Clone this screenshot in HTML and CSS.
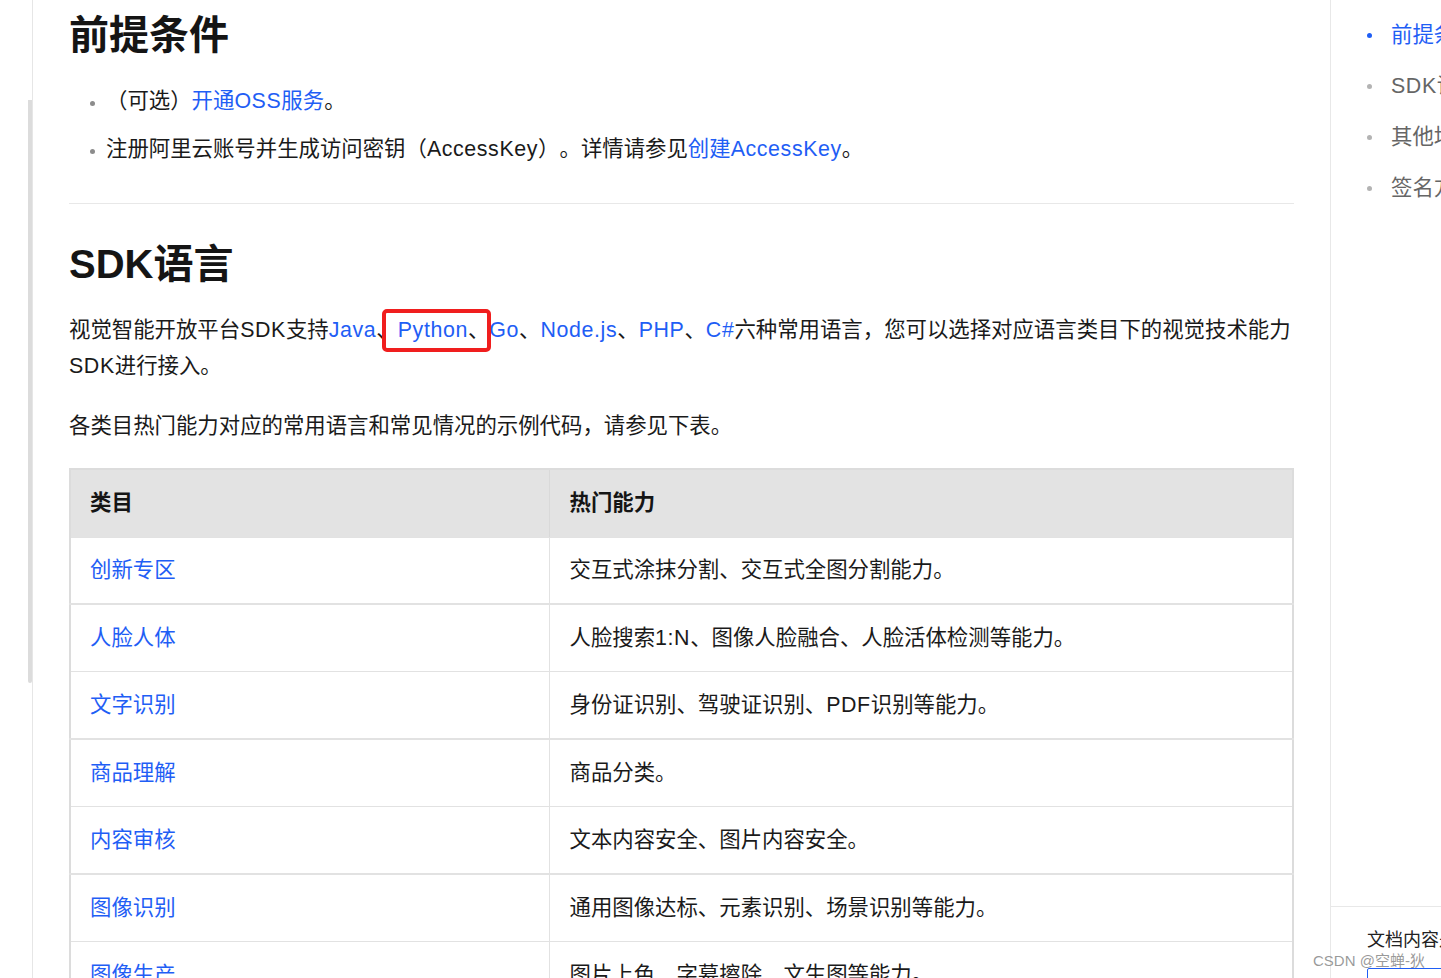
FILE: index.html
```html
<!DOCTYPE html>
<html lang="zh-CN">
<head>
<meta charset="utf-8">
<title>视觉智能开放平台 SDK</title>
<link rel="stylesheet" href="styles.css">
</head>
<body>
<div class="page">
  <aside class="gutter"><div class="thumb"></div></aside>
  <main class="doc">
    <h1 class="title">前提条件</h1>
    <ul class="bullets">
      <li>（可选）<a href="#">开通<span class="en">OSS</span>服务</a>。</li>
      <li>注册阿里云账号并生成访问密钥（<span class="en">AccessKey</span>）。详情请参见<a href="#">创建<span class="en">AccessKey</span></a>。</li>
    </ul>
    <hr class="divider">
    <h2 class="title">SDK语言</h2>
    <p class="para">视觉智能开放平台<span class="en">SDK</span>支持<a class="en" href="#">Java</a>、<span class="mark"><a class="en" href="#">Python</a>、</span><a class="en" href="#">Go</a>、<a class="en" href="#">Node.js</a>、<a class="en" href="#">PHP</a>、<a class="en" href="#">C#</a>六种常用语言，您可以选择对应语言类目下的视觉技术能力<span class="en">SDK</span>进行接入。</p>
    <p class="para gap">各类目热门能力对应的常用语言和常见情况的示例代码，请参见下表。</p>
    <table class="grid">
      <colgroup><col class="c1"><col></colgroup>
      <thead>
        <tr><th>类目</th><th>热门能力</th></tr>
      </thead>
      <tbody>
        <tr><td><a href="#">创新专区</a></td><td>交互式涂抹分割、交互式全图分割能力。</td></tr>
        <tr><td><a href="#">人脸人体</a></td><td>人脸搜索<span class="en">1:N</span>、图像人脸融合、人脸活体检测等能力。</td></tr>
        <tr><td><a href="#">文字识别</a></td><td>身份证识别、驾驶证识别、<span class="en">PDF</span>识别等能力。</td></tr>
        <tr><td><a href="#">商品理解</a></td><td>商品分类。</td></tr>
        <tr><td><a href="#">内容审核</a></td><td>文本内容安全、图片内容安全。</td></tr>
        <tr><td><a href="#">图像识别</a></td><td>通用图像达标、元素识别、场景识别等能力。</td></tr>
        <tr><td><a href="#">图像生产</a></td><td>图片上色、字幕擦除、文生图等能力。</td></tr>
      </tbody>
    </table>
  </main>
  <aside class="toc">
    <ul class="toc-list">
      <li class="active">前提条件</li>
      <li><span class="en">SDK</span>语言</li>
      <li>其他场景</li>
      <li>签名方式</li>
    </ul>
    <div class="toc-foot">
      <div class="foot-q">文档内容是否对您有帮助？</div>
      <div class="foot-box"></div>
    </div>
  </aside>
</div>
<div class="watermark">CSDN @空蝉-狄</div>
</body>
</html>
```

FILE: styles.css
```css
* { box-sizing: border-box; }
html, body { margin: 0; padding: 0; background: #fff; }
body {
  font-family: "Liberation Sans", "Noto Sans CJK SC", sans-serif;
  color: #1a1a1a;
  font-size: 21.4px;
  overflow: hidden;
  text-spacing-trim: space-all;
}
a { color: #1f5ef5; text-decoration: none; }
.en { letter-spacing: 0.6px; }

.page { display: flex; height: 978px; overflow: hidden; }

.gutter {
  width: 33px;
  flex: none;
  border-right: 1px solid #e6e6e6;
  display: flex;
  justify-content: flex-end;
}
.thumb {
  width: 4px;
  height: 583px;
  margin-top: 100px;
  background: #dcdcdc;
  border-radius: 0 0 2px 2px;
}

.doc {
  width: 1297px;
  flex: none;
  padding: 7px 36px 0;
}

.title {
  margin: 0;
  font-size: 40px;
  line-height: 56px;
  font-weight: 700;
  color: #151515;
}

.bullets { list-style: none; margin: 20px 0 0; padding: 0; }
.bullets li {
  display: flex;
  align-items: center;
  line-height: 36px;
  padding-left: 21px;
  margin-bottom: 12px;
}
.bullets li:last-child { margin-bottom: 0; }
.bullets li::before {
  content: "";
  width: 5px;
  height: 5px;
  border-radius: 50%;
  background: #8c8c8c;
  margin-right: 11px;
  margin-top: 4px;
  flex: none;
}

.divider {
  border: 0;
  border-top: 1px solid #e8e8e8;
  margin: 36px 0 32px;
  height: 0;
}

.para { margin: 20px 0 0; line-height: 36px; }
.para.gap { margin-top: 24px; }

.mark { position: relative; display: inline-block; }
.mark::after {
  content: "";
  position: absolute;
  left: -16px;
  right: -2px;
  top: -3px;
  bottom: -4px;
  border: 4px solid #f01e1e;
  border-radius: 5px;
}

.grid {
  width: 100%;
  margin-top: 24px;
  border-collapse: collapse;
  border: 2px solid #dcdcdc;
}
.grid .c1 { width: 479px; }
.grid th, .grid td {
  text-align: left;
  padding: 0 20px;
  border-left: 1px solid #e2e2e2;
  border-bottom: 1px solid #e2e2e2;
  line-height: 30px;
}
.grid th {
  background: #e3e3e3;
  height: 68px;
  font-weight: 700;
  color: #151515;
  border-left-color: #d9d9d9;
}
.grid td { height: 67.4px; }
.grid th:first-child, .grid td:first-child { padding-left: 19px; border-left: 0; }
.grid tbody tr:nth-child(odd) td { border-bottom-width: 2px; }

.toc {
  flex: 1;
  min-width: 0;
  border-left: 1px solid #e8e8e8;
  display: flex;
  flex-direction: column;
  overflow: hidden;
}
.toc-list { list-style: none; margin: 0; padding: 20px 0 0 36px; }
.toc-list li {
  display: flex;
  align-items: center;
  line-height: 30px;
  margin-bottom: 21px;
  white-space: nowrap;
  color: #666;
}
.toc-list li::before {
  content: "";
  width: 5px;
  height: 5px;
  border-radius: 50%;
  background: #b3b3b3;
  margin-right: 19px;
  flex: none;
}
.toc-list li.active { color: #1f5ef5; }
.toc-list li.active::before { background: #1f5ef5; }

.toc-foot {
  margin-top: auto;
  height: 72px;
  flex: none;
  border-top: 1px solid #e8e8e8;
  padding: 20px 0 0 36px;
  overflow: hidden;
}
.foot-q {
  font-size: 18px;
  line-height: 26px;
  white-space: nowrap;
  color: #222;
}
.foot-box {
  margin-top: 15px;
  width: 200px;
  height: 40px;
  border: 1px solid #1f5ef5;
  border-radius: 2px;
}

.watermark {
  position: absolute;
  left: 1313px;
  top: 951px;
  font-size: 15px;
  line-height: 20px;
  color: rgba(120, 120, 120, 0.75);
  white-space: nowrap;
}
```
